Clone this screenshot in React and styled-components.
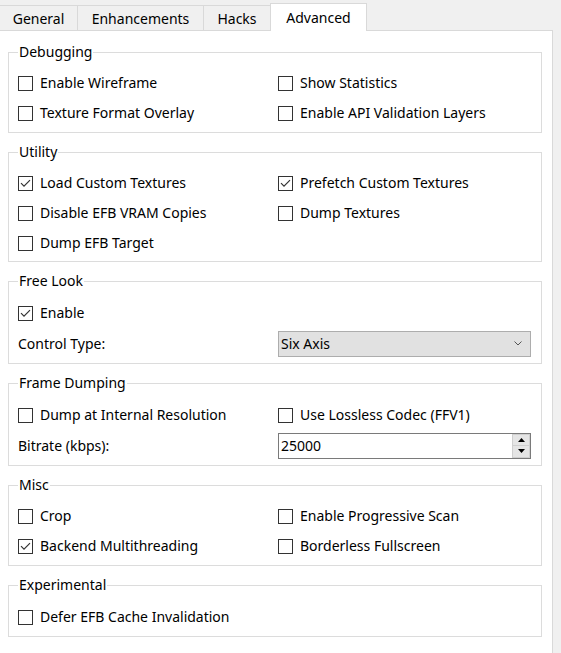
import React from "react";
import styled, { createGlobalStyle } from "styled-components";

const Global = createGlobalStyle`
  html, body { margin: 0; padding: 0; background: #f0f0f0; }
  body { font-family: "Noto Sans", "Open Sans", sans-serif; font-size: 14px; color: #000; }
  * { box-sizing: border-box; }
`;

const Page = styled.div`
  width: 561px;
  height: 653px;
  overflow: hidden;
  background: #f0f0f0;
`;

const Window = styled.div`
  width: 553px;
  display: flex;
  flex-direction: column;
  height: 100%;
`;

const TabBar = styled.div`
  display: flex;
  align-items: flex-end;
  height: 31px;
  border-bottom: 1px solid #d9d9d9;
  margin-left: -1px;
`;

const Tab = styled.div`
  width: ${(p) => p.$w}px;
  height: ${(p) => (p.$active ? 28 : 25)}px;
  display: flex;
  align-items: center;
  justify-content: center;
  padding-top: ${(p) => (p.$active ? 0 : 1)}px;
  background: ${(p) => (p.$active ? "#fff" : "#f0f0f0")};
  border: 1px solid #d9d9d9;
  border-bottom: none;
  border-left: ${(p) => (p.$active || p.$first ? "1px solid #d9d9d9" : "none")};
  margin-left: ${(p) => (p.$active ? -1 : 0)}px;
  margin-bottom: ${(p) => (p.$active ? -1 : 0)}px;
  line-height: 16px;
  white-space: nowrap;
`;

const Panel = styled.div`
  flex: 1;
  background: #fff;
  border-right: 1px solid #d9d9d9;
  padding: 13px 10px 0 8px;
  display: flex;
  flex-direction: column;
  gap: 11px;
`;

const Group = styled.fieldset`
  margin: 0;
  min-width: 0;
  border: 1px solid #dcdcdc;
  padding: ${(p) => p.$pt ?? 8}px 10px ${(p) => p.$pb ?? 4}px 9px;
`;

const Legend = styled.legend`
  padding: 0 1px;
  line-height: 16px;
  font-size: 14px;
`;

const Grid = styled.div`
  display: grid;
  grid-template-columns: 260px 1fr;
`;

const Row = styled.label`
  display: flex;
  align-items: center;
  height: 30px;
  gap: 7px;
  white-space: nowrap;
  line-height: 16px;
`;

const Box = styled.span`
  width: 15px;
  height: 15px;
  border: 1px solid #333;
  background: #fff;
  display: flex;
  flex: none;
`;

const Field = styled.div`
  display: flex;
  align-items: center;
  height: ${(p) => p.$h}px;
  line-height: 16px;
`;

const Combo = styled.div`
  width: 100%;
  height: 26px;
  background: #e1e1e1;
  border: 1px solid #adadad;
  display: flex;
  align-items: center;
  justify-content: space-between;
  padding: 0 8px 0 2px;
`;

const Spin = styled.div`
  width: 100%;
  height: 26px;
  background: #fff;
  border: 1px solid #7a7a7a;
  display: flex;
  align-items: stretch;
`;

const SpinText = styled.span`
  flex: 1;
  display: flex;
  align-items: center;
  padding-left: 2px;
`;

const SpinButtons = styled.div`
  width: 18px;
  display: flex;
  flex-direction: column;
`;

const SpinBtn = styled.div`
  flex: 1;
  background: #e5e5e5;
  border: 1px solid #cfcfcf;
  border-top: ${(p) => (p.$down ? "none" : "1px solid #cfcfcf")};
  display: flex;
  align-items: center;
  justify-content: center;
`;

const Check = ({ checked, children }) => (
  <Row>
    <Box>
      {checked && (
        <svg width="13" height="13" viewBox="0 0 13 13">
          <polyline points="2,6.2 5,9.2 11,3.2" fill="none" stroke="#333" strokeWidth="1.2" />
        </svg>
      )}
    </Box>
    <span>{children}</span>
  </Row>
);

const Empty = () => <div />;

export default function App() {
  return (
    <Page>
      <Global />
      <Window>
        <TabBar>
          <Tab $w={79} $first>General</Tab>
          <Tab $w={126}>Enhancements</Tab>
          <Tab $w={67}>Hacks</Tab>
          <Tab $w={97} $active>Advanced</Tab>
        </TabBar>
        <Panel>
          <Group>
            <Legend>Debugging</Legend>
            <Grid>
              <Check>Enable Wireframe</Check>
              <Check>Show Statistics</Check>
              <Check>Texture Format Overlay</Check>
              <Check>Enable API Validation Layers</Check>
            </Grid>
          </Group>
          <Group $pb={3}>
            <Legend>Utility</Legend>
            <Grid>
              <Check checked>Load Custom Textures</Check>
              <Check checked>Prefetch Custom Textures</Check>
              <Check>Disable EFB VRAM Copies</Check>
              <Check>Dump Textures</Check>
              <Check>Dump EFB Target</Check>
              <Empty />
            </Grid>
          </Group>
          <Group $pt={9}>
            <Legend>Free Look</Legend>
            <Grid>
              <Check checked>Enable</Check>
              <Empty />
              <Field $h={31}>Control Type:</Field>
              <Field $h={31}>
                <Combo>
                  <span>Six Axis</span>
                  <svg width="8" height="5" viewBox="0 0 8 5">
                    <polyline points="0.5,0.5 4,4 7.5,0.5" fill="none" stroke="#555" strokeWidth="1" />
                  </svg>
                </Combo>
              </Field>
            </Grid>
          </Group>
          <Group $pt={9}>
            <Legend>Frame Dumping</Legend>
            <Grid>
              <Check>Dump at Internal Resolution</Check>
              <Check>Use Lossless Codec (FFV1)</Check>
              <Field $h={31}>Bitrate (kbps):</Field>
              <Field $h={31}>
                <Spin>
                  <SpinText>25000</SpinText>
                  <SpinButtons>
                    <SpinBtn>
                      <svg width="7" height="4" viewBox="0 0 7 4">
                        <polygon points="0,4 3.5,0 7,4" fill="#000" />
                      </svg>
                    </SpinBtn>
                    <SpinBtn $down>
                      <svg width="7" height="4" viewBox="0 0 7 4">
                        <polygon points="0,0 7,0 3.5,4" fill="#000" />
                      </svg>
                    </SpinBtn>
                  </SpinButtons>
                </Spin>
              </Field>
            </Grid>
          </Group>
          <Group>
            <Legend>Misc</Legend>
            <Grid>
              <Check>Crop</Check>
              <Check>Enable Progressive Scan</Check>
              <Check checked>Backend Multithreading</Check>
              <Check>Borderless Fullscreen</Check>
            </Grid>
          </Group>
          <Group $pt={9}>
            <Legend>Experimental</Legend>
            <Grid>
              <Check>Defer EFB Cache Invalidation</Check>
              <Empty />
            </Grid>
          </Group>
        </Panel>
      </Window>
    </Page>
  );
}
